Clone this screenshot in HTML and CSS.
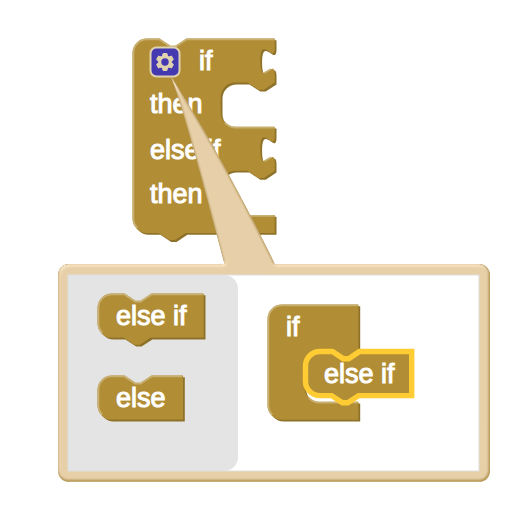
FILE: index.html
```
<!DOCTYPE html>
<html lang="en">
<head>
<meta charset="utf-8">
<title>If block mutator</title>
<link rel="stylesheet" href="styles.css">
</head>
<body>
<main class="workspace">
<svg class="canvas" viewBox="0 0 524 524" role="img" aria-label="If block with its mutator bubble">
  <defs>
    <filter id="emboss" x="-10%" y="-10%" width="120%" height="120%">
      <feGaussianBlur in="SourceAlpha" stdDeviation="1" result="blur"/>
      <feSpecularLighting in="blur" surfaceScale="0.5" specularConstant="0.5" specularExponent="10" lighting-color="white" result="spec">
        <fePointLight x="-5000" y="-10000" z="20000"/>
      </feSpecularLighting>
      <feComposite in="spec" in2="SourceAlpha" operator="in" result="spec"/>
      <feComposite in="SourceGraphic" in2="spec" operator="arithmetic" k1="0" k2="1" k3="1" k4="0"/>
    </filter>
    <path id="main-shape" d="M0,8 A8,8 0 0,1 8,0 H15 l6,4 3,0 6,-4 H79 v5 c0,10 -8,-8 -8,7.5 s8,-2.5 8,7.5 V24.5 l-6,4 -3,0 -6,-4 h-7 a8,8 0 0,0 -8,8 v8.500 a8,8 0 0,0 8,8 H79 v5 c0,10 -8,-8 -8,7.5 s8,-2.5 8,7.5 V73.500 l-6,4 -3,0 -6,-4 h-7 a8,8 0 0,0 -8,8 v8.5 a8,8 0 0,0 8,8 H79 V108 H29.5 l-6,4 -3,0 -6,-4 H8 a8,8 0 0,1 -8,-8 z"/>
    <path id="elseif-shape" d="M0,8 A8,8 0 0,1 8,0 H15 l6,4 3,0 6,-4 H59 V24.5 H29.5 l-6,4 -3,0 -6,-4 H8 a8,8 0 0,1 -8,-8 z"/>
    <path id="else-shape" d="M0,8 A8,8 0 0,1 8,0 H15 l6,4 3,0 6,-4 H47.5 V24.5 H8 a8,8 0 0,1 -8,-8 z"/>
    <path id="if-shape" d="M0,8 A8,8 0 0,1 8,0 H50.5 V26 l-6,4 -3,0 -6,-4 h-7 a8,8 0 0,0 -8,8 v12 a8,8 0 0,0 8,8 H50.5 V64 H8 a8,8 0 0,1 -8,-8 z"/>
  </defs>

  <g transform="translate(132.500 38.500) scale(1.8)">
    <use href="#main-shape" class="dark" transform="translate(1 1)"/>
    <use href="#main-shape" class="block"/>
    <path class="light" d="M2.7,105.3 A7.5,7.5 0 0,1 0.5,100 V8 A7.5,7.5 0 0,1 8,0.5 H15 l6,4 3,0 6,-4 H78.5 M51.3,46.700 a8.5,8.5 0 0,0 5.7,2.8 H78.5 M51.3,95.700 a8.5,8.5 0 0,0 5.7,2.8 H78.5 M73.2,19.2 l3.6,-2.1 M73.2,68.2 l3.6,-2.1"/>
  </g>
  <g class="label">
    <text x="199" y="70">if</text>
    <text x="150" y="113">then</text>
    <text x="150" y="159">else if</text>
    <text x="150" y="203">then</text>
  </g>

  <g>
    <rect class="icon-box" x="150.500" y="47.500" width="29" height="29" rx="6"/>
    <g transform="translate(165 62)">
      <g class="gear-teeth">
        <path id="tooth" d="M-2.700,-5 L-1.900,-8.500 H1.900 L2.700,-5 z"/>
        <use href="#tooth" transform="rotate(60)"/>
        <use href="#tooth" transform="rotate(120)"/>
        <use href="#tooth" transform="rotate(180)"/>
        <use href="#tooth" transform="rotate(240)"/>
        <use href="#tooth" transform="rotate(300)"/>
      </g>
      <circle class="gear-ring" r="5.200"/>
    </g>
  </g>

  <g transform="translate(58 264) scale(1.8)">
    <g class="bubble" filter="url(#emboss)">
      <path d="M62.800,-104 C71,-82 83,-36 92.200,-1 Q93,2 90,3 H124 Q121,2 120,-1 C101,-40 78,-81 62.800,-104 z"/>
      <rect width="240" height="121" rx="6"/>
    </g>
  </g>
  <rect class="mutator" x="68" y="275" width="411" height="196"/>
  <path class="flyout" d="M68,275 H224 a14,14 0 0,1 14,14 V457 a14,14 0 0,1 -14,14 H68 z"/>
  <rect class="mutator-edge" x="68" y="275" width="411" height="196"/>

  <g transform="translate(97.500 293.500) scale(1.8)">
    <use href="#elseif-shape" class="dark" transform="translate(1 1)"/>
    <use href="#elseif-shape" class="block"/>
    <path class="light" d="M2.7,21.800 A7.5,7.5 0 0,1 0.5,16.500 V8 A7.5,7.5 0 0,1 8,0.5 H15 l6,4 3,0 6,-4 H58.500"/>
  </g>
  <g transform="translate(97.500 375.500) scale(1.8)">
    <use href="#else-shape" class="dark" transform="translate(1 1)"/>
    <use href="#else-shape" class="block"/>
    <path class="light" d="M2.7,21.800 A7.5,7.5 0 0,1 0.5,16.500 V8 A7.5,7.5 0 0,1 8,0.5 H15 l6,4 3,0 6,-4 H47"/>
  </g>
  <g transform="translate(267.500 304.500) scale(1.8)">
    <use href="#if-shape" class="dark" transform="translate(1 1)"/>
    <use href="#if-shape" class="block"/>
    <path class="light" d="M2.7,61.300 A7.5,7.5 0 0,1 0.5,56 V8 A7.5,7.5 0 0,1 8,0.5 H50 M22.800,51.700 a8.5,8.5 0 0,0 5.700,2.800 H50"/>
  </g>
  <use href="#elseif-shape" class="block selected" transform="translate(305.500 351.500) scale(1.8)"/>
  <g class="label">
    <text x="116" y="325">else if</text>
    <text x="116" y="407">else</text>
    <text x="286" y="336">if</text>
    <text x="324" y="383">else if</text>
  </g>
</svg>
</main>
</body>
</html>
```
FILE: styles.css
```
body {
  margin: 0;
  background: #fff;
}

.workspace {
  width: 100%;
}

.canvas {
  display: block;
  width: 100%;
  height: auto;
}

.block {
  fill: #b18e35;
}

.dark {
  fill: #8e722a;
}

.light {
  fill: none;
  stroke: #c8b072;
  stroke-width: 1;
}

.selected {
  stroke: #fc3;
  stroke-width: 3;
}

.label {
  font-family: "Liberation Sans", Arial, sans-serif;
  font-size: 27px;
  fill: #fff;
  stroke: #fff;
  stroke-width: 1;
}

.icon-box {
  fill: #4539b1;
  stroke: #e0d2ae;
  stroke-width: 2;
}

.gear-teeth {
  fill: #e0d2ae;
  stroke: #e0d2ae;
  stroke-width: 1;
  stroke-linejoin: round;
}

.gear-ring {
  fill: #4539b1;
  stroke: #e0d2ae;
  stroke-width: 3;
}

.bubble {
  fill: #b18e35;
}

.mutator {
  fill: #fff;
}

.flyout {
  fill: #e4e4e4;
}

.mutator-edge {
  fill: none;
  stroke: #ddd;
  stroke-width: 1;
}
```
